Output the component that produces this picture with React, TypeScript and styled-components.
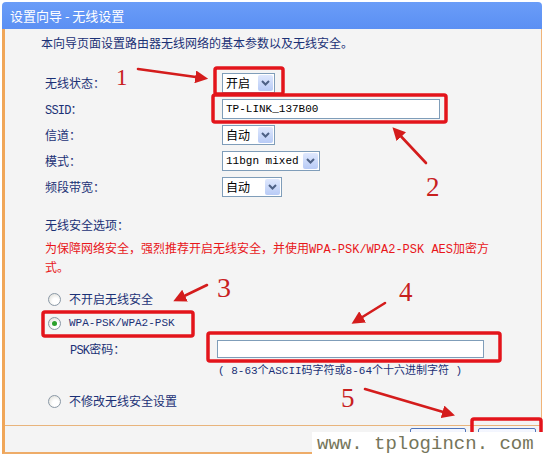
import React from 'react';
import styled, { createGlobalStyle } from 'styled-components';

const GlobalStyle = createGlobalStyle`
  html, body { margin: 0; padding: 0; background: #fff; }
  body {
    font-family: 'Liberation Mono', 'Noto Sans CJK SC', monospace;
    font-size: 12px;
  }
`;

const NAVY = '#1b3176';
const ANNO = '#d41c1c';

const Screen = styled.div`
  position: relative;
  width: 545px;
  height: 455px;
  padding-top: 2px;
  box-sizing: border-box;
  overflow: hidden;
  background: #fff;
`;

const TitleBar = styled.div`
  margin: 0 3px 0 2px;
  height: 27px;
  padding-left: 8px;
  display: flex;
  align-items: center;
  border-radius: 4px 4px 0 0;
  background: linear-gradient(#6a9df8, #5b8ff3);
  color: #fff;
  font-family: 'Noto Sans CJK SC', sans-serif;
  font-size: 13px;
`;

const Panel = styled.div`
  margin: 0 3px 0 2px;
  height: 425px;
  box-sizing: border-box;
  display: flex;
  flex-direction: column;
  background: #f4f4f4;
  border-left: 3px solid #f0a658;
  border-right: 1px solid #f0b478;
  border-bottom: 2px solid #eeac68;
`;

const Body = styled.div`
  flex: 1;
  padding: 6px 0 0 36px;
  color: ${NAVY};
`;

const Intro = styled.div`
  line-height: 20px;
`;

const Form = styled.div`
  margin: 15px 0 0 4px;
  display: grid;
  grid-template-columns: 177px auto;
  grid-auto-rows: 26px;
  align-items: center;
`;

const Label = styled.span<{ $latin?: boolean }>`
  font-size: 12px;
  letter-spacing: ${(p) => (p.$latin ? '-0.8px' : '0')};
`;

const Select = styled.div<{ $w: number }>`
  width: ${(p) => p.$w}px;
  height: 20px;
  box-sizing: border-box;
  padding-left: 3px;
  display: flex;
  align-items: center;
  background: #fff;
  border: 1px solid #7f9db9;
  color: #000;
`;

const Latin = styled.span`
  font-size: 11px;
`;

const DropBtn = styled.span`
  margin-left: auto;
  margin-right: 1px;
  width: 15px;
  height: 16px;
  display: flex;
  align-items: center;
  justify-content: center;
  border-radius: 2px;
  background: linear-gradient(#dfe8fd, #b8cbf6);
`;

const TextInput = styled.div<{ $w: number; $h: number }>`
  width: ${(p) => p.$w}px;
  height: ${(p) => p.$h}px;
  box-sizing: border-box;
  padding-left: 3px;
  display: flex;
  align-items: center;
  background: #fff;
  border: 1px solid #7f9db9;
  color: #000;
  font-size: 11px;
`;

const SectionTitle = styled.div`
  margin: 17px 0 0 4px;
  line-height: 20px;
`;

const Warning = styled.div`
  margin: 4px 0 0 4px;
  width: 450px;
  line-height: 19px;
  color: #e8161a;
`;

const Options = styled.div`
  margin-top: 8px;
  display: flex;
  flex-direction: column;
`;

const OptionRow = styled.label`
  height: 24px;
  padding-left: 7px;
  display: flex;
  align-items: center;
  gap: 8px;
`;

const Radio = styled.span<{ $on?: boolean }>`
  width: 13px;
  height: 13px;
  box-sizing: border-box;
  display: inline-flex;
  align-items: center;
  justify-content: center;
  border-radius: 50%;
  border: 1px solid #8a98a6;
  background: radial-gradient(circle at 60% 65%, #fff 30%, #d8d8d0 100%);

  &::after {
    content: '';
    display: ${(p) => (p.$on ? 'block' : 'none')};
    width: 5px;
    height: 5px;
    border-radius: 50%;
    background: #2ca12c;
  }
`;

const PskRow = styled.div`
  margin-top: 2px;
  height: 24px;
  padding-left: 29px;
  display: grid;
  grid-template-columns: 147px auto;
  align-items: center;
`;

const Hint = styled.div`
  margin-left: 177px;
  line-height: 20px;
  font-size: 11px;
`;

const LastOption = styled(OptionRow)`
  margin-top: 8px;
`;

const Footer = styled.div`
  height: 26px;
  padding-right: 5px;
  display: flex;
  justify-content: flex-end;
  align-items: flex-start;
  gap: 12px;
  border-top: 1px solid #e8b47c;
`;

const Button = styled.button<{ $w: number }>`
  margin-top: 2px;
  width: ${(p) => p.$w}px;
  height: 21px;
  padding: 0;
  border: 1px solid #4f74ba;
  border-radius: 2px;
  background: linear-gradient(#f6f8ff, #dfe6f6);
  color: ${NAVY};
  font-family: 'Noto Sans CJK SC', sans-serif;
  font-size: 12px;
  line-height: 12px;
`;

const Watermark = styled.div`
  position: absolute;
  left: 312px;
  top: 432px;
  right: 0;
  bottom: 0;
  padding-left: 5px;
  background: #fff;
  color: #75755a;
  font-family: 'Liberation Mono', monospace;
  font-size: 19px;
  line-height: 24px;
  white-space: nowrap;
`;

const Overlay = styled.svg`
  position: absolute;
  left: 0;
  top: 0;
  pointer-events: none;
`;

const Num = styled.span<{ $x: number; $y: number; $size: number }>`
  position: absolute;
  left: ${(p) => p.$x}px;
  top: ${(p) => p.$y}px;
  font-family: 'Liberation Serif', serif;
  font-size: ${(p) => p.$size}px;
  line-height: 0.7;
  color: #c8201e;
`;

const Chevron = () => (
  <svg width="9" height="6" viewBox="0 0 9 6">
    <path d="M1 1 L4.5 4.5 L8 1" fill="none" stroke="#4d6185" strokeWidth="2" />
  </svg>
);

const boxes = [
  { x: 215, y: 68, w: 68, h: 26 },
  { x: 213, y: 95, w: 233, h: 27 },
  { x: 43, y: 312, w: 150, h: 24 },
  { x: 208, y: 333, w: 292, h: 28 },
  { x: 472, y: 419, w: 69, h: 40 },
];

const arrows = [
  { x1: 138, y1: 69, x2: 203, y2: 78 },
  { x1: 426, y1: 163, x2: 396, y2: 131 },
  { x1: 207, y1: 285, x2: 178, y2: 299 },
  { x1: 385, y1: 303, x2: 356, y2: 321 },
  { x1: 365, y1: 389, x2: 450, y2: 414 },
];

const Annotations = () => (
  <Overlay width="545" height="455">
    <defs>
      <marker id="head" markerWidth="5" markerHeight="5" refX="3" refY="2.5" orient="auto">
        <path d="M0 0 L5 2.5 L0 5 Z" fill={ANNO} />
      </marker>
    </defs>
    {boxes.map((b, i) => (
      <rect key={i} x={b.x} y={b.y} width={b.w} height={b.h} rx="2" fill="none" stroke="#e3141b" strokeWidth="3.5" />
    ))}
    {arrows.map((a, i) => (
      <line key={i} {...a} stroke={ANNO} strokeWidth="2.6" strokeLinecap="round" markerEnd="url(#head)" />
    ))}
  </Overlay>
);

export default function App() {
  return (
    <>
      <GlobalStyle />
      <Screen>
        <TitleBar>设置向导 - 无线设置</TitleBar>
        <Panel>
          <Body>
            <Intro>本向导页面设置路由器无线网络的基本参数以及无线安全。</Intro>
            <Form>
              <Label>无线状态：</Label>
              <Select $w={53}>
                开启
                <DropBtn>
                  <Chevron />
                </DropBtn>
              </Select>
              <Label $latin>SSID：</Label>
              <TextInput $w={218} $h={20}>TP-LINK_137B00</TextInput>
              <Label>信道：</Label>
              <Select $w={53}>
                自动
                <DropBtn>
                  <Chevron />
                </DropBtn>
              </Select>
              <Label>模式：</Label>
              <Select $w={98}>
                <Latin>11bgn mixed</Latin>
                <DropBtn>
                  <Chevron />
                </DropBtn>
              </Select>
              <Label>频段带宽：</Label>
              <Select $w={60}>
                自动
                <DropBtn>
                  <Chevron />
                </DropBtn>
              </Select>
            </Form>
            <SectionTitle>无线安全选项：</SectionTitle>
            <Warning>为保障网络安全，强烈推荐开启无线安全，并使用WPA-PSK/WPA2-PSK AES加密方式。</Warning>
            <Options>
              <OptionRow>
                <Radio />
                不开启无线安全
              </OptionRow>
              <OptionRow>
                <Radio $on />
                <Latin>WPA-PSK/WPA2-PSK</Latin>
              </OptionRow>
              <PskRow>
                <span>
                  <Label $latin>PSK</Label>密码：
                </span>
                <TextInput $w={267} $h={18} />
              </PskRow>
              <Hint>( 8-63个ASCII码字符或8-64个十六进制字符 )</Hint>
              <LastOption>
                <Radio />
                不修改无线安全设置
              </LastOption>
            </Options>
          </Body>
          <Footer>
            <Button $w={56}>上一步</Button>
            <Button $w={58}>下一步</Button>
          </Footer>
        </Panel>
        <Annotations />
        <Num $x={116} $y={70} $size={23}>1</Num>
        <Num $x={426} $y={178} $size={27}>2</Num>
        <Num $x={217} $y={278} $size={28}>3</Num>
        <Num $x={399} $y={283} $size={27}>4</Num>
        <Num $x={341} $y={389} $size={27}>5</Num>
        <Watermark>www. tplogincn. com</Watermark>
      </Screen>
    </>
  );
}
